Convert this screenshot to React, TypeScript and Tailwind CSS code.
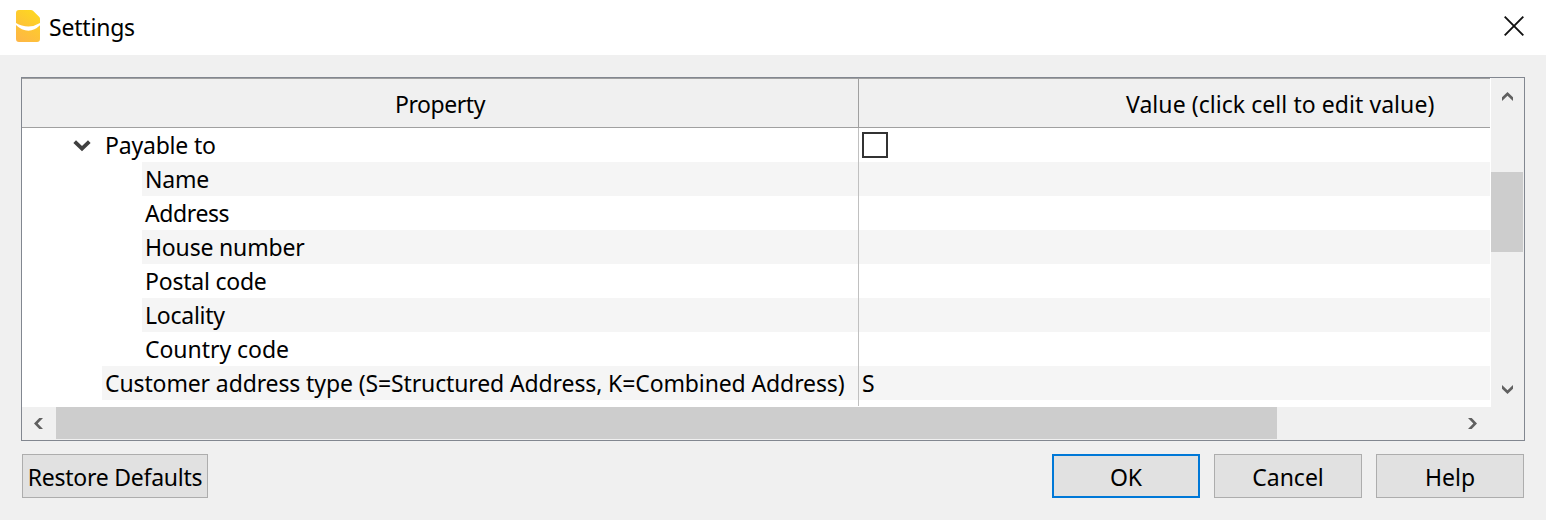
import React from "react";

type Row = { label: string; indent: string; value?: string; expandable?: boolean; shaded: boolean; tracking: string };

const ROWS: Row[] = [
  { label: "Payable to", indent: "pl-[80px]", expandable: true, shaded: false, tracking: "tracking-[-0.2px]" },
  { label: "Name", indent: "pl-[120px]", shaded: true, tracking: "tracking-[-0.2px]" },
  { label: "Address", indent: "pl-[120px]", shaded: false, tracking: "tracking-[-0.4px]" },
  { label: "House number", indent: "pl-[120px]", shaded: true, tracking: "tracking-[-0.18px]" },
  { label: "Postal code", indent: "pl-[120px]", shaded: false, tracking: "tracking-[-0.22px]" },
  { label: "Locality", indent: "pl-[120px]", shaded: true, tracking: "tracking-[-0.25px]" },
  { label: "Country code", indent: "pl-[120px]", shaded: false, tracking: "tracking-[-0.04px]" },
  {
    label: "Customer address type (S=Structured Address, K=Combined Address)",
    indent: "pl-[80px]",
    value: "S",
    shaded: true,
    tracking: "tracking-[-0.12px]",
  },
];

function AppIcon() {
  return (
    <svg width="25" height="32" viewBox="0 0 25 32" className="shrink-0">
      <defs>
        <linearGradient id="top" x1="0" y1="1" x2="1" y2="0">
          <stop offset="0" stopColor="#fdbf3a" />
          <stop offset="1" stopColor="#fedb1c" />
        </linearGradient>
        <linearGradient id="bottom" x1="0" y1="1" x2="1" y2="0">
          <stop offset="0" stopColor="#feb548" />
          <stop offset="1" stopColor="#fdcc2b" />
        </linearGradient>
      </defs>
      <path d="M3 0H15Q16.200 0 17 0.800L23.300 7Q24 7.700 24 8.700V13Q18.500 16.400 12.500 16.400Q5.500 16.400 0 13V3Q0 0 3 0Z" fill="url(#top)" />
      <path d="M0 15Q5.500 20.700 12.500 20.700Q18.500 20.700 24 15.300V29Q24 32 21 32H3Q0 32 0 29Z" fill="url(#bottom)" />
    </svg>
  );
}

function ScrollArrow({ rotate }: { rotate: string }) {
  return (
    <svg width="13" height="13" viewBox="0 0 13 13" className={`shrink-0 ${rotate}`}>
      <path d="M6.500 2L12 7.300V11L6.500 5.700L1 11V7.300Z" fill="#606060" />
    </svg>
  );
}

function DialogButton({ label, className, tracking }: { label: string; className: string; tracking: string }) {
  return (
    <button className={`flex h-[44px] items-center justify-center bg-[#e1e1e1] pt-[2px] ${className}`}>
      <span className={`whitespace-nowrap ${tracking}`}>{label}</span>
    </button>
  );
}

export default function App() {
  return (
    <div className="flex h-[520px] w-[1546px] flex-col overflow-hidden bg-[#f0f0f0] font-['Noto_Sans',sans-serif] text-[23px] leading-[34px] text-black">
      <header className="flex h-[55px] shrink-0 items-center bg-white pr-[22px] pl-[16px]">
        <div className="pb-[3px]">
          <AppIcon />
        </div>
        <h1 className="mb-[2px] ml-[8px] tracking-[-0.2px]">Settings</h1>
        <svg width="20" height="20" viewBox="0 0 20 20" className="mb-[3px] ml-auto">
          <path d="M0.700 0.700L19.300 19.300M19.300 0.700L0.700 19.300" stroke="#111" strokeWidth="1.900" />
        </svg>
      </header>

      <section className="mt-[22px] ml-[21px] flex h-[364px] w-[1504px] shrink-0 flex-col border border-[#828790]">
        <div className="flex h-[329px] shrink-0">
          <div className="flex w-[1468px] shrink-0 flex-col overflow-hidden bg-white">
            <div className="flex h-[50px] shrink-0 border-y border-[#a0a0a0] bg-[#f0f0f0]">
              <div className="flex w-[837px] shrink-0 items-center justify-center border-r border-[#a0a0a0] pt-[2px]">
                <span className="tracking-[-0.45px]">Property</span>
              </div>
              <div className="flex items-center pt-[2px] pl-[267px] whitespace-nowrap">
                <span className="tracking-[0.06px]">Value (click cell to edit value)</span>
              </div>
            </div>
            {ROWS.map((row) => (
              <div key={row.label} className="flex h-[34px] shrink-0">
                <div className={`flex w-[837px] shrink-0 border-r border-[#c0c0c0] ${row.indent}`}>
                  {row.expandable && (
                    <svg width="18" height="12" viewBox="0 0 18 12" className="mt-[12px] mr-[11px] -ml-[29px] shrink-0">
                      <path d="M1.700 1.700L9 8.700L16.300 1.700" fill="none" stroke="#404040" strokeWidth="3.800" />
                    </svg>
                  )}
                  <div className={`grow pl-[3px] whitespace-nowrap ${row.shaded ? "bg-[#f5f5f5]" : "bg-white"}`}>
                    <span className={row.tracking}>{row.label}</span>
                  </div>
                </div>
                <div className={`grow pl-[3px] ${row.shaded ? "bg-[#f5f5f5]" : "bg-white"}`}>
                  {row.expandable && <div className="mt-[4px] size-[26px] border-2 border-[#333] bg-white" />}
                  {row.value}
                </div>
              </div>
            ))}
            <div className="flex h-[7px] shrink-0">
              <div className="mb-px w-[837px] border-r border-[#c0c0c0]" />
            </div>
          </div>
          <div className="flex grow flex-col items-center border-l border-white bg-[#f0f0f0] pt-[12px] pb-[11px]">
            <ScrollArrow rotate="" />
            <div className="mt-[69px] mb-auto h-[80px] w-[32px] self-start bg-[#cdcdcd]" />
            <ScrollArrow rotate="rotate-180" />
          </div>
        </div>
        <div className="flex h-[33px] items-center bg-[#f0f0f0]">
          <div className="flex w-[34px] pl-[10px]">
            <ScrollArrow rotate="-rotate-90" />
          </div>
          <div className="mb-px h-[32px] w-[1221px] bg-[#cdcdcd]" />
          <div className="ml-[189px]">
            <ScrollArrow rotate="rotate-90" />
          </div>
        </div>
      </section>

      <footer className="mt-[13px] flex pr-[22px] pl-[22px]">
        <DialogButton label="Restore Defaults" tracking="tracking-[-0.25px]" className="mr-auto w-[186px] border border-[#adadad]" />
        <div className="flex gap-[14px]">
          <DialogButton label="OK" tracking="tracking-[0px]" className="w-[148px] border-2 border-[#0078d7]" />
          <DialogButton label="Cancel" tracking="tracking-[0px]" className="w-[148px] border border-[#adadad]" />
          <DialogButton label="Help" tracking="tracking-[0px]" className="w-[148px] border border-[#adadad]" />
        </div>
      </footer>
    </div>
  );
}
